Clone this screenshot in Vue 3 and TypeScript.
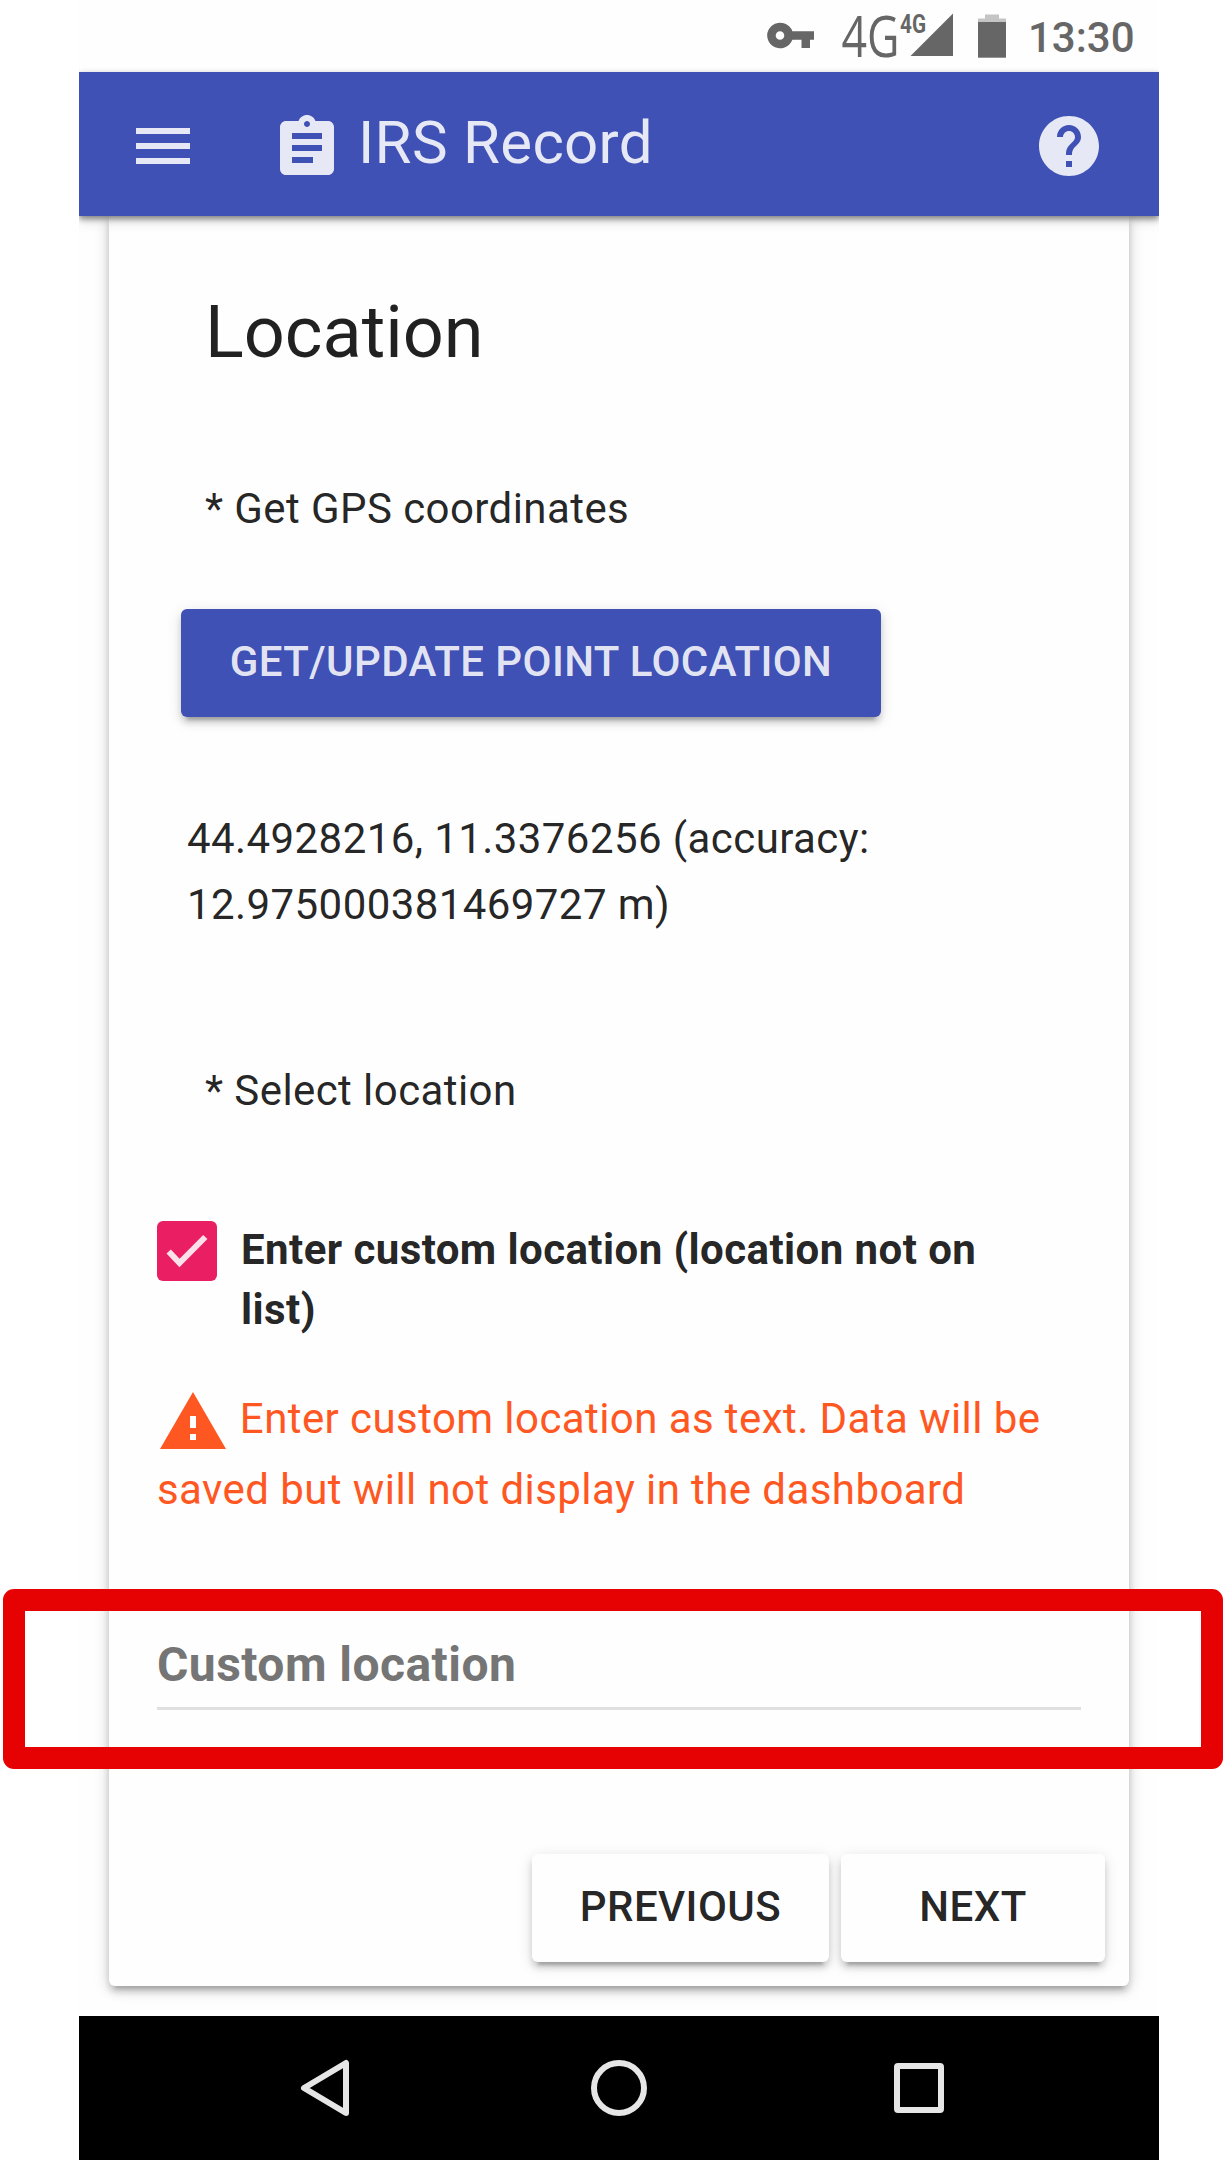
<script setup lang="ts">
import { ref } from 'vue'

const title = ref('IRS Record')
const latitude = 44.4928216
const longitude = 11.3376256
const accuracy = '12.975000381469727'
const customLocation = ref(true)
</script>

<template>
  <div class="page">
    <div class="phone">
      <header class="status">
        <svg class="status-icons" width="250" height="72" viewBox="0 0 250 72">
          <path class="ink" fill-rule="evenodd" d="M36.4 31.2A13 12.8 0 1 0 36.4 39.8H45.5V48H54V39.8H58V31.2ZM24 31.2a4.3 4.3 0 1 1 0 8.6a4.3 4.3 0 1 1 0-8.6Z" />
          <text class="net-big" x="85.5" y="57" textLength="58" lengthAdjust="spacingAndGlyphs">4G</text>
          <text class="net-small" x="144" y="32.5" textLength="26" lengthAdjust="spacingAndGlyphs">4G</text>
          <path class="ink" d="M154.5 56L197 13.5V56Z" />
          <path class="cap" d="M222 22.5V18.5H229V14.5H243V18.5H250V22.5Z" />
          <path class="ink" d="M222 22H250V57.7H222Z" />
        </svg>
        <span class="clock">13:30</span>
      </header>

      <nav class="appbar">
        <svg class="menu" viewBox="0 0 24 24"><path d="M3 18h18v-2H3v2zm0-5h18v-2H3v2zm0-7v2h18V6H3z" /></svg>
        <svg class="record" viewBox="0 0 24 24"><path d="M19 3h-4.18C14.4 1.84 13.3 1 12 1c-1.3 0-2.4.84-2.82 2H5c-1.1 0-2 .9-2 2v14c0 1.1.9 2 2 2h14c1.1 0 2-.9 2-2V5c0-1.1-.9-2-2-2zm-7 0c.55 0 1 .45 1 1s-.45 1-1 1-1-.45-1-1 .45-1 1-1zm2 14H7v-2h7v2zm3-4H7v-2h10v2zm0-4H7V7h10v2z" /></svg>
        <h1>{{ title }}</h1>
        <svg class="help" viewBox="0 0 24 24"><path d="M12 2C6.48 2 2 6.48 2 12s4.48 10 10 10 10-4.48 10-10S17.52 2 12 2zm1 17h-2v-2h2v2zm2.07-7.75l-.9.92C13.45 12.9 13 13.5 13 15h-2v-.5c0-1.1.45-2.1 1.17-2.83l1.24-1.26c.37-.36.59-.86.59-1.41 0-1.1-.9-2-2-2s-2 .9-2 2H8c0-2.21 1.79-4 4-4s4 1.79 4 4c0 .88-.36 1.68-.93 2.25z" /></svg>
      </nav>

      <main class="content">
        <section class="card">
          <h2>Location</h2>
          <p class="label gps">* Get GPS coordinates</p>
          <button class="btn primary">GET/UPDATE POINT LOCATION</button>
          <p class="coords">{{ latitude }}, {{ longitude }} (accuracy:<br />{{ accuracy }} m)</p>
          <p class="label select">* Select location</p>

          <div class="check-row">
            <span class="box">
              <svg v-if="customLocation" viewBox="0 0 60 60"><path d="M11.7 30.5L22.5 42L48.3 16" /></svg>
            </span>
            <span class="check-text">Enter custom location (location not on<br />list)</span>
          </div>

          <p class="warning">
            <svg viewBox="0 0 24 24"><path d="M1 21h22L12 2 1 21zm12-3h-2v-2h2v2zm0-4h-2v-4h2v4z" /></svg>
            Enter custom location as text. Data will be<br />saved but will not display in the dashboard
          </p>

          <div class="field">Custom location</div>

          <div class="actions">
            <button class="btn">PREVIOUS</button>
            <button class="btn">NEXT</button>
          </div>
        </section>
      </main>

      <footer class="navbar">
        <svg width="1080" height="144" viewBox="0 0 1080 144">
          <path d="M225 72L267 47V97Z" />
          <circle cx="540" cy="72" r="25" />
          <rect x="818" y="50" width="44" height="44" rx="1" />
        </svg>
      </footer>
    </div>
    <div class="highlight"></div>
  </div>
</template>

<style>
body {
  margin: 0;
  background: #fff;
}
</style>

<style scoped>
.page {
  position: relative;
  width: 1227px;
  height: 2160px;
  overflow: hidden;
  font-family: Roboto, sans-serif;
  background: #fff;
}
.phone {
  display: flex;
  flex-direction: column;
  width: 1080px;
  height: 2160px;
  margin-left: 79px;
  overflow: hidden;
  background: #fefefe;
}
h1,
h2,
p {
  margin: 0;
  font-weight: 400;
}
.status {
  display: flex;
  flex: none;
  height: 72px;
  padding-left: 677px;
  color: #666;
}
.ink {
  fill: #666;
}
.cap {
  fill: #c4c4c4;
}
.net-big {
  font: 400 56px "Open Sans", "Noto Sans", sans-serif;
  fill: #666;
}
.net-small {
  font: 700 25px Roboto, sans-serif;
  fill: #666;
}
.clock {
  margin-left: 22px;
  font-size: 42px;
  font-weight: 500;
  line-height: 75px;
}
.appbar {
  position: relative;
  z-index: 1;
  display: flex;
  flex: none;
  height: 144px;
  padding: 0 54px 0 48px;
  color: rgba(255, 255, 255, 0.87);
  background: #3f51b5;
  box-shadow: 0 3px 6px rgba(0, 0, 0, 0.45), 0 6px 12px rgba(0, 0, 0, 0.1);
}
.appbar svg {
  flex: none;
  width: 72px;
  height: 72px;
  margin-top: 38px;
  fill: currentColor;
}
.appbar .record {
  margin-top: 40px;
  margin-left: 72px;
}
.appbar h1 {
  flex: 1;
  margin-left: 15px;
  font-size: 60px;
  line-height: 141px;
  letter-spacing: 0.005em;
}
.content {
  flex: none;
  height: 1800px;
  padding: 0 30px;
}
.card {
  display: flex;
  flex-direction: column;
  box-sizing: border-box;
  height: 1770px;
  padding: 75px 24px 24px 48px;
  color: rgba(0, 0, 0, 0.87);
  background: #fefefe;
  border-radius: 0 0 6px 6px;
  box-shadow: 0 3px 15px rgba(0, 0, 0, 0.2), 0 6px 6px rgba(0, 0, 0, 0.14), 0 9px 3px -6px rgba(0, 0, 0, 0.12);
}
.card h2 {
  margin-left: 48px;
  font-size: 72px;
  line-height: 84px;
}
.label,
.coords,
.warning {
  font-size: 42px;
  line-height: 66px;
  letter-spacing: 0.01em;
}
.label {
  margin-left: 48px;
}
.gps {
  margin-top: 101px;
}
.btn {
  box-sizing: border-box;
  min-width: 264px;
  height: 108px;
  padding: 0 48px;
  border: 0;
  border-radius: 6px;
  color: rgba(0, 0, 0, 0.87);
  background: #fefefe;
  font: 500 42px/106px Roboto, sans-serif;
  letter-spacing: 0.01em;
  white-space: nowrap;
  padding-bottom: 2px;
  box-shadow: 0 3px 15px rgba(0, 0, 0, 0.12), 0 6px 6px rgba(0, 0, 0, 0.14), 0 9px 3px -6px rgba(0, 0, 0, 0.2);
}
.primary {
  align-self: flex-start;
  width: 700px;
  margin: 67px 0 89px 24px;
  color: rgba(255, 255, 255, 0.87);
  background: #3f51b5;
}
.coords {
  margin-left: 30px;
}
.select {
  margin-top: 120px;
}
.check-row {
  display: flex;
  gap: 24px;
  margin-top: 96px;
}
.box {
  flex: none;
  width: 60px;
  height: 60px;
  margin-top: 1px;
  border-radius: 6px;
  background: #e91e63;
}
.box svg {
  display: block;
  fill: none;
  stroke: rgba(255, 255, 255, 0.87);
  stroke-width: 6;
}
.check-text {
  font-size: 42px;
  font-weight: 700;
  line-height: 60px;
  letter-spacing: 0.01em;
}
.warning {
  margin-top: 43px;
  line-height: 71px;
  color: #ff5722;
}
.warning svg {
  width: 72px;
  height: 72px;
  margin: -3px 0 -6px;
  vertical-align: -19px;
  fill: currentColor;
}
.field {
  height: 72px;
  margin: 110px 24px 0 0;
  border-bottom: 3px solid #e0e0e0;
  color: #757575;
  font-size: 48px;
  font-weight: 700;
  line-height: 60px;
  letter-spacing: 0.00938em;
}
.actions {
  display: flex;
  justify-content: flex-end;
  gap: 12px;
  margin-top: 144px;
}
.navbar {
  flex: none;
  height: 144px;
  background: #000;
}
.navbar svg {
  display: block;
  fill: none;
  stroke: #e6e6e6;
  stroke-width: 6;
  stroke-linejoin: round;
}
.highlight {
  position: absolute;
  top: 1589px;
  left: 3px;
  box-sizing: border-box;
  width: 1220px;
  height: 180px;
  border: 22px solid #e60202;
  border-radius: 11px;
}
</style>
